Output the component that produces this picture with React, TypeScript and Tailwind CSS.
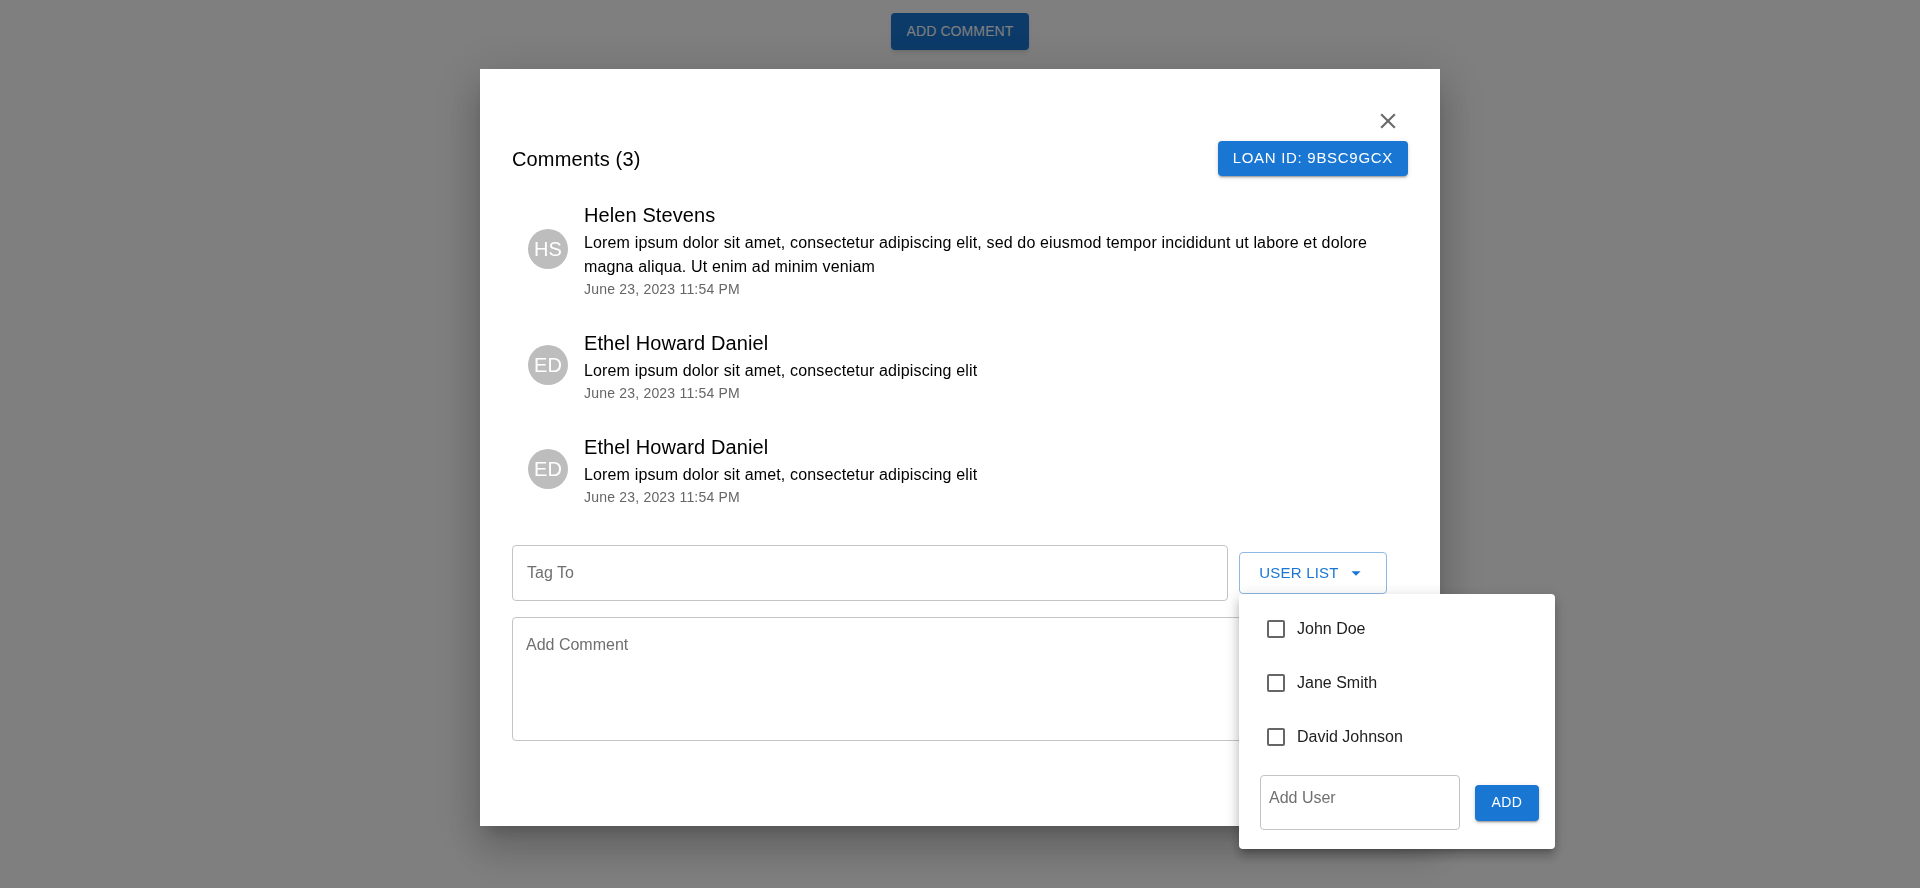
import React from 'react';

interface CommentItem {
  initials: string;
  name: string;
  body: string;
  date: string;
}

const COMMENTS: CommentItem[] = [
  {
    initials: 'HS',
    name: 'Helen Stevens',
    body: 'Lorem ipsum dolor sit amet, consectetur adipiscing elit, sed do eiusmod tempor incididunt ut labore et dolore magna aliqua. Ut enim ad minim veniam',
    date: 'June 23, 2023 11:54 PM'
  },
  {
    initials: 'ED',
    name: 'Ethel Howard Daniel',
    body: 'Lorem ipsum dolor sit amet, consectetur adipiscing elit',
    date: 'June 23, 2023 11:54 PM'
  },
  {
    initials: 'ED',
    name: 'Ethel Howard Daniel',
    body: 'Lorem ipsum dolor sit amet, consectetur adipiscing elit',
    date: 'June 23, 2023 11:54 PM'
  }
];

const USERS = ['John Doe', 'Jane Smith', 'David Johnson'];

// MUI-like close glyph
const CloseIcon = () => (
  <svg viewBox="0 0 24 24" width="26" height="26" fill="#6b6b6b">
    <path d="M19 6.41 17.59 5 12 10.59 6.41 5 5 6.41 10.59 12 5 17.59 6.41 19 12 13.41 17.59 19 19 17.59 13.41 12z" />
  </svg>
);

const ArrowDropDown = () => (
  <svg viewBox="0 0 24 24" width="22" height="22" fill="#1976d2">
    <path d="M7 10l5 5 5-5z" />
  </svg>
);

function CommentRow({ item }: { item: CommentItem }) {
  return (
    <div className="flex items-center px-4">
      <div className="w-[56px] shrink-0">
        <div className="w-10 h-10 rounded-full bg-[#bdbdbd] text-white text-[20px] flex items-center justify-center">
          {item.initials}
        </div>
      </div>
      <div className="flex flex-col">
        <div className="text-[20px] leading-[32px] tracking-[0.1px] text-black">{item.name}</div>
        <div className="text-[16px] leading-[24px] tracking-[0.15px] text-black">{item.body}</div>
        <div className="text-[14px] leading-[20px] tracking-[0.2px] text-[#666666]">{item.date}</div>
      </div>
    </div>
  );
}

function UserMenu() {
  return (
    <div className="fixed left-[1239px] top-[594px] w-[316px] bg-white rounded-[4px] shadow-[0_5px_5px_-3px_rgba(0,0,0,0.2),0_8px_10px_1px_rgba(0,0,0,0.14),0_3px_14px_2px_rgba(0,0,0,0.12)] pt-2 pb-[19px]">
      {USERS.map((u) => (
        <div key={u} className="flex items-center h-[54px] pl-[28px] gap-3">
          <span className="w-[18px] h-[18px] border-2 border-[#666666] rounded-[2px]" />
          <span className="text-[16px] text-[#212121]">{u}</span>
        </div>
      ))}
      <div className="mt-[11px] flex items-center pl-[21px] gap-[15px]">
        <textarea
          placeholder="Add User"
          className="w-[200px] h-[55px] resize-none border border-[#c4c4c4] rounded-[4px] pl-[8px] pt-[10px] text-[16px] leading-[23px] placeholder:text-[#6f6f6f] outline-none"
        />
        <button className="w-[64px] h-[36px] rounded-[4px] bg-[#1976d2] text-white text-[14px] tracking-[0.4px] shadow-[0_3px_1px_-2px_rgba(0,0,0,0.2),0_2px_2px_0_rgba(0,0,0,0.14),0_1px_5px_0_rgba(0,0,0,0.12)]">
          ADD
        </button>
      </div>
    </div>
  );
}

export default function App() {
  return (
    <div className="font-[family-name:Liberation_Sans,Arial,sans-serif] relative min-h-screen bg-white">
      <div className="flex justify-center pt-[13px]">
        <button className="h-[37px] px-4 rounded-[4px] bg-[#1976d2] text-white text-[14px] tracking-[0.1px] shadow-md">
          ADD COMMENT
        </button>
      </div>

      {/* backdrop */}
      <div className="fixed inset-0 bg-black/50" />

      <div className="fixed inset-0 flex justify-center items-start pt-[69px]">
        <div className="w-[960px] h-[757px] bg-white px-8 pt-8 shadow-[0_11px_15px_-7px_rgba(0,0,0,0.2),0_24px_38px_3px_rgba(0,0,0,0.14),0_9px_46px_8px_rgba(0,0,0,0.12)]">
          <div className="flex justify-end">
            <button className="w-10 h-10 flex items-center justify-center rounded-full">
              <CloseIcon />
            </button>
          </div>

          <div className="flex items-center justify-between h-[35px]">
            <h2 className="text-[20px] tracking-[0.15px] text-black">Comments (3)</h2>
            <button className="h-[35px] px-[15px] rounded-[4px] bg-[#1976d2] text-white text-[15px] tracking-[0.7px] shadow-[0_3px_1px_-2px_rgba(0,0,0,0.2),0_2px_2px_0_rgba(0,0,0,0.14),0_1px_5px_0_rgba(0,0,0,0.12)]">
              LOAN ID: 9BSC9GCX
            </button>
          </div>

          <div className="mt-[23px] flex flex-col gap-[28px]">
            {COMMENTS.map((c, i) => (
              <CommentRow key={i} item={c} />
            ))}
          </div>

          <div className="mt-[38px] flex items-start">
            <input
              placeholder="Tag To"
              className="w-[716px] h-[56px] border border-[#c4c4c4] rounded-[4px] pl-[14px] text-[16px] placeholder:text-[#6f6f6f] outline-none"
            />
            <button className="ml-[11px] mt-[7px] w-[148px] h-[42px] border border-[#8fb8e4] rounded-[4px] flex items-center justify-center gap-[6px] text-[#1976d2] text-[15px] tracking-[0.2px]">
              <span>USER LIST</span>
              <ArrowDropDown />
            </button>
          </div>

          <textarea
            placeholder="Add Comment"
            className="mt-[16px] block w-full h-[124px] resize-none border border-[#c4c4c4] rounded-[4px] pl-[13px] pt-[15px] text-[16px] leading-[23px] placeholder:text-[#6f6f6f] outline-none"
          />
        </div>
      </div>

      <UserMenu />
    </div>
  );
}
